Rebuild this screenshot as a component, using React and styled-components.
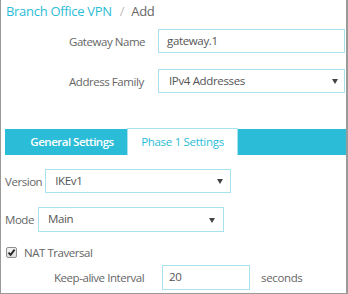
import styled, { createGlobalStyle } from 'styled-components'

const cyan = '#2bbdd7'

const GlobalStyle = createGlobalStyle`
  html, body {
    margin: 0;
    padding: 0;
    background: #fff;
  }
  body {
    font-family: "Open Sans", "Noto Sans", sans-serif;
    font-size: 11px;
    letter-spacing: -0.35px;
    color: #666;
  }
`

const Frame = styled.div`
  box-sizing: border-box;
  width: 348px;
  height: 294px;
  border-left: 1px solid #9a9a9a;
  border-right: 2px solid #9a9a9a;
  border-bottom: 1px solid #9a9a9a;
  overflow: hidden;
`

const Breadcrumb = styled.div`
  height: 22px;
  line-height: 22px;
  padding-left: 5px;
  font-size: 13px;
  letter-spacing: -0.3px;
  color: #666;
`

const Crumb = styled.span`
  color: ${cyan};
`

const Sep = styled.span`
  color: #bbb;
  margin: 0 7px 0 8px;
`

const TopForm = styled.div`
  display: grid;
  grid-template-columns: 73px 187px;
  column-gap: 16px;
  row-gap: 16px;
  padding-left: 68px;
  margin-top: 7px;
  align-items: center;
`

const Label = styled.label`
  color: #666;
  white-space: nowrap;
  font-size: 11.5px;
  letter-spacing: -0.45px;
  ${p => p.$w && `width: ${p.$w}px;`}
`

const Field = styled.div`
  box-sizing: border-box;
  position: relative;
  width: ${p => p.$w}px;
  height: ${p => p.$h || 24}px;
  border: 1.5px solid #a8e2ee;
  background: #fff;
  padding-left: ${p => p.$pad || 8}px;
  line-height: ${p => (p.$h || 24) - 3}px;
  color: #555;
  font-size: 11.5px;
`

const Arrow = styled.span`
  position: absolute;
  right: ${p => p.$r || 6}px;
  top: 50%;
  margin-top: -2px;
  width: 0;
  height: 0;
  border-left: 3px solid transparent;
  border-right: 3px solid transparent;
  border-top: 5px solid #444;
`

const TabBar = styled.div`
  display: flex;
  align-items: flex-end;
  height: 26px;
  margin: 36px 0 0 4px;
  background: ${cyan};
`

const Tab = styled.div`
  box-sizing: border-box;
  height: ${p => (p.$active ? 27 : 26)}px;
  width: ${p => p.$w}px;
  display: flex;
  align-items: center;
  justify-content: center;
  font-size: 11.5px;
  font-weight: ${p => (p.$active ? 400 : 600)};
  letter-spacing: ${p => (p.$active ? -0.3 : -0.5)}px;
  color: ${p => (p.$active ? cyan : '#fff')};
  background: ${p => (p.$active ? '#fff' : 'transparent')};
  border: ${p => (p.$active ? `1px solid #a8e2ee` : 'none')};
  border-bottom: none;
  padding: 0 0 1px ${p => p.$shift || 0}px;
`

const Row = styled.div`
  display: flex;
  align-items: center;
  padding-left: ${p => p.$indent || 4}px;
  margin-top: ${p => p.$mt || 0}px;
  gap: ${p => p.$gap || 4}px;
`

const Box = styled.span`
  box-sizing: border-box;
  width: 11px;
  height: 11px;
  border: 1px solid #8f8f8f;
  border-radius: 2px;
  background: linear-gradient(#f4f4f4, #dcdcdc);
  display: inline-flex;
  align-items: center;
  justify-content: center;
`

const Unit = styled.span`
  color: #666;
  font-size: 11.5px;
  margin-left: 7px;
`

function Check() {
  return (
    <Box>
      <svg width="9" height="9" viewBox="0 0 9 9">
        <path d="M1.5 4.6 L3.6 6.8 L7.6 1.6" fill="none" stroke="#222" strokeWidth="1.8" />
      </svg>
    </Box>
  )
}

export default function App() {
  return (
    <Frame>
      <GlobalStyle />
      <Breadcrumb>
        <Crumb>Branch Office VPN</Crumb>
        <Sep>/</Sep>
        Add
      </Breadcrumb>

      <TopForm>
        <Label>Gateway Name</Label>
        <Field $w={187}>gateway.1</Field>
        <Label>Address Family</Label>
        <Field $w={187} $pad={10}>
          IPv4 Addresses
          <Arrow />
        </Field>
      </TopForm>

      <TabBar>
        <Tab $w={122} $shift={12}>General Settings</Tab>
        <Tab $w={111} $active>Phase 1 Settings</Tab>
      </TabBar>

      <Row $mt={14} $gap={3}>
        <Label>Version</Label>
        <Field $w={186} $h={24} $pad={9}>
          IKEv1
          <Arrow $r={7} />
        </Field>
      </Row>

      <Row $mt={14} $gap={4}>
        <Label>Mode</Label>
        <Field $w={186} $h={25} $pad={9}>
          Main
          <Arrow $r={8} />
        </Field>
      </Row>

      <Row $mt={13} $indent={5} $gap={7}>
        <Check />
        <Label>NAT Traversal</Label>
      </Row>

      <Row $mt={5} $indent={53} $gap={0}>
        <Label $w={104}>Keep-alive Interval</Label>
        <Field $w={88} $h={25} $pad={6}>20</Field>
        <Unit>seconds</Unit>
      </Row>
    </Frame>
  )
}
